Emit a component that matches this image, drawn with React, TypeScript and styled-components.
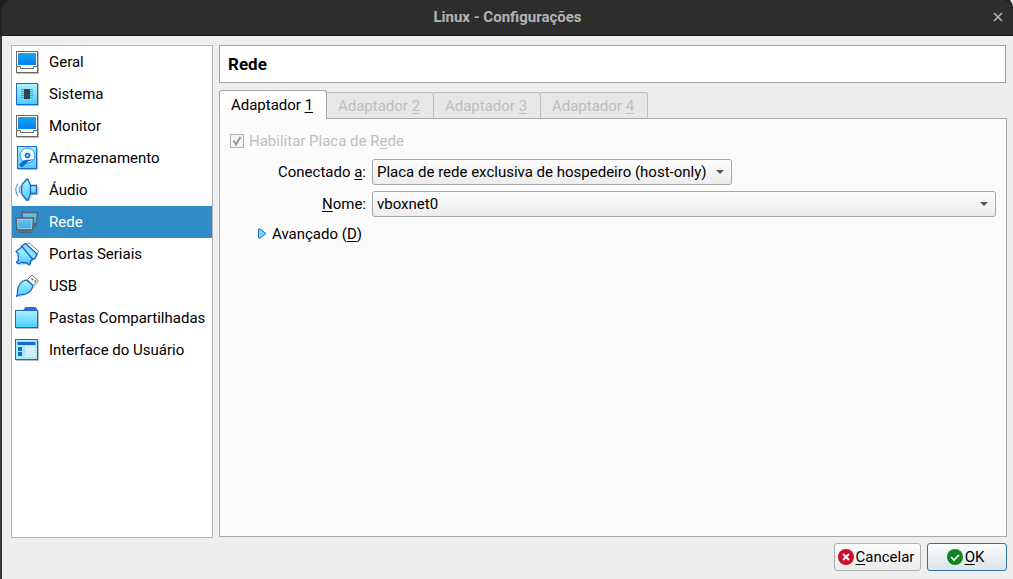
import React from "react";
import styled, { createGlobalStyle } from "styled-components";

const GlobalStyle = createGlobalStyle`
  *, *::before, *::after { box-sizing: border-box; }
  body {
    margin: 0;
    background: #1f1f1f;
    font-family: Roboto, "Noto Sans", sans-serif;
    font-size: 15px;
    line-height: 20px;
    color: #000;
  }
  button, select, input { font: inherit; color: inherit; }
`;

const Dialog = styled.div`
  display: flex;
  flex-direction: column;
  min-height: 100vh;
  background: #eeeeee;
  border-left: 2px solid #35383a;
`;

const TitleBar = styled.header`
  display: grid;
  grid-template-columns: 30px 1fr 30px;
  align-items: center;
  height: 36px;
  padding-bottom: 2px;
  background: #2d2d2d;
  border-bottom: 1px solid #1b1b1b;
  border-top-left-radius: 10px;
  border-top-right-radius: 10px;
  box-shadow: -2px -2px 0 2px #1f1f1f;
`;

const TitleText = styled.h1`
  grid-column: 2;
  margin: 0;
  text-align: center;
  font-size: 15px;
  line-height: 20px;
  font-weight: 700;
  color: #b4b4b4;
`;

const CloseButton = styled.button`
  display: flex;
  align-items: center;
  justify-content: center;
  height: 32px;
  padding: 0;
  border: 0;
  background: none;
`;

const Content = styled.div`
  flex: 1;
  display: flex;
  flex-direction: column;
  gap: 5px;
  padding: 9px 6px 8px 9px;
`;

const Columns = styled.div`
  flex: 1;
  display: flex;
  gap: 6px;
`;

const Categories = styled.nav`
  flex: none;
  width: 202px;
  background: #fff;
  border: 1px solid #b4b4b4;
`;

const CategoryLink = styled.a<{ $active: boolean }>`
  display: flex;
  align-items: center;
  gap: 10px;
  height: 32px;
  padding-left: 3px;
  text-decoration: none;
  white-space: nowrap;
  color: ${(p) => (p.$active ? "#fff" : "#000")};
  background: ${(p) => (p.$active ? "#308cc6" : "transparent")};
`;

const Page = styled.main`
  flex: 1;
  min-width: 0;
  display: flex;
  flex-direction: column;
  padding-bottom: 1px;
`;

const PageTitle = styled.h2`
  margin: 0 1px 7px 0;
  padding: 8px;
  font-size: 17px;
  line-height: 20px;
  font-weight: 700;
  background: #fff;
  border: 1px solid #a0a0a0;
`;

const TabList = styled.div`
  display: flex;
  align-items: flex-end;
  height: 28px;
`;

const Tab = styled.button<{ $active: boolean }>`
  width: ${(p) => (p.$active ? 108 : 107)}px;
  height: ${(p) => (p.$active ? 29 : 26)}px;
  padding: 0 2px 0 0;
  z-index: 1;
  margin-bottom: ${(p) => (p.$active ? -1 : 0)}px;
  border: 1px solid ${(p) => (p.$active ? "#a8a8a8" : "#bdbdbd")};
  border-left-width: ${(p) => (p.$active ? 1 : 0)}px;
  border-bottom: 0;
  border-radius: ${(p) => (p.$active ? "3px 3px 0 0" : "0 3px 0 0")};
  background: ${(p) => (p.$active ? "linear-gradient(#ffffff, #fbfbfb)" : "#e7e7e7")};
  color: ${(p) => (p.$active ? "#000" : "#bebebe")};
`;

const TabPanel = styled.section`
  flex: 1;
  padding: 12px 10px;
  background: #fbfbfb;
  border: 1px solid #a8a8a8;
`;

const EnableLabel = styled.label`
  display: flex;
  align-items: center;
  gap: 5px;
  color: #bebebe;
`;

const CheckMark = styled.svg`
  grid-area: 1 / 1;
  pointer-events: none;
`;

const CheckSlot = styled.span`
  display: grid;
  place-items: center;
`;

const CheckInput = styled.input`
  grid-area: 1 / 1;
  appearance: none;
  width: 14px;
  height: 14px;
  margin: 0;
  border: 1px solid #b2b2b2;
  background: #f4f4f4;
`;

const Form = styled.div`
  display: grid;
  grid-template-columns: 136px 1fr;
  column-gap: 6px;
  row-gap: 6px;
  margin-top: 8px;
  align-items: center;
`;

const FieldLabel = styled.label`
  text-align: right;
`;

const SelectSlot = styled.div<{ $wide?: boolean }>`
  display: grid;
  align-items: center;
  width: ${(p) => (p.$wide ? "100%" : "360px")};
  max-width: 100%;
`;

const Select = styled.select`
  grid-area: 1 / 1;
  appearance: none;
  width: 100%;
  height: 26px;
  padding: 0 24px 0 4px;
  border: 1px solid #a8a8a8;
  border-radius: 3px;
  background: linear-gradient(#fdfdfd, #ececec);
`;

const SelectArrow = styled.svg`
  grid-area: 1 / 1;
  justify-self: end;
  margin-right: 8px;
  pointer-events: none;
`;

const AdvancedButton = styled.button`
  display: flex;
  align-items: center;
  gap: 5px;
  margin: 7px 0 0 27px;
  padding: 0;
  border: 0;
  background: none;
`;

const Disclosure = styled.svg`
  flex: none;
  margin-bottom: 2px;
`;

const Footer = styled.footer`
  display: flex;
  justify-content: flex-end;
  gap: 6px;
`;

const ActionButton = styled.button<{ $primary?: boolean }>`
  display: flex;
  align-items: center;
  justify-content: center;
  gap: 2px;
  width: ${(p) => (p.$primary ? 80 : 87)}px;
  height: 28px;
  padding: 0 3px 0 0;
  border: 1px solid ${(p) => (p.$primary ? "#2f74a3" : "#b0b0b0")};
  border-radius: 3px;
  background: ${(p) =>
    p.$primary ? "linear-gradient(#fafdfe, #dae3e9)" : "linear-gradient(#fdfdfd, #ebebeb)"};
`;

const Key = styled.span`
  text-decoration: underline;
  text-decoration-thickness: 1px;
  text-decoration-skip-ink: none;
  text-underline-offset: 2px;
`;

const IconSvg = styled.svg`
  flex: none;
`;

const Icon = ({ children }: { children: React.ReactNode }) => (
  <IconSvg width="24" height="24" viewBox="0 0 24 24" fill="none" aria-hidden="true">
    {children}
  </IconSvg>
);

const GradientDefs = styled.svg`
  position: absolute;
`;

const Gradients = () => (
  <GradientDefs width="0" height="0" aria-hidden="true">
    <defs>
      <linearGradient id="screen" x1="0" y1="0" x2="0" y2="1">
        <stop offset="0" stopColor="#1ba4e6" />
        <stop offset="1" stopColor="#0080fa" />
      </linearGradient>
      <linearGradient id="cyan" x1="0" y1="0" x2="0" y2="1">
        <stop offset="0" stopColor="#b4f0ff" />
        <stop offset="1" stopColor="#48ceff" />
      </linearGradient>
      <linearGradient id="lit" x1="0" y1="0" x2="0" y2="1">
        <stop offset="0" stopColor="#72bfe6" />
        <stop offset="1" stopColor="#3caee8" />
      </linearGradient>
    </defs>
  </GradientDefs>
);

const ScreenIcon = () => (
  <Icon>
    <path d="M2 23.5h21.5V2" stroke="#bbb" />
    <rect x="1.5" y="1.5" width="21" height="21" fill="#fff" stroke="#686868" />
    <rect x="3" y="3" width="18" height="12" fill="url(#screen)" />
    <path d="M2 16.5h3.5v2h13v-2H22" stroke="#686868" />
  </Icon>
);

const SystemIcon = () => (
  <Icon>
    <path d="M2 23.5h21.5V2" stroke="#bbb" />
    <rect x="1.5" y="1.5" width="21" height="21" fill="url(#cyan)" stroke="#1769cc" />
    <path d="M6 7.5h12M6 9.5h12M6 11.5h12M6 13.5h12M6 15.5h12" stroke="#5c9ab8" />
    <rect x="9" y="7" width="6" height="10" fill="#36414f" />
  </Icon>
);

const StorageIcon = () => (
  <Icon>
    <path d="M3 23.5h19.5V2" stroke="#bbb" />
    <rect x="2.5" y=".5" width="19" height="22" fill="url(#cyan)" stroke="#1769cc" />
    <circle cx="12.5" cy="9.5" r="7.5" fill="#eafaff" stroke="#3a8ee0" />
    <path d="M13.5 14l-3 4-4 3-2-2.5 4-3.5z" fill="#1769cc" stroke="#1769cc" strokeLinejoin="round" />
    <path d="M17.5 13.5L13 15" stroke="#1769cc" />
    <circle cx="12.5" cy="9.5" r="2" fill="#8be0ff" stroke="#1769cc" strokeWidth="1.5" />
  </Icon>
);

const AudioIcon = () => (
  <Icon>
    <path d="M3 5.5q-4.500 6 0 12.500M5.500 8q-2.500 3.500 0 7.500" stroke="#4a9be6" strokeWidth="1.200" />
    <path d="M15 16.500h8V8.500M14 23l2.500-6" stroke="#bbb" />
    <path d="M14.500 7.500h7v8h-7z" fill="url(#cyan)" stroke="#1464c8" strokeWidth="1.300" />
    <path
      d="M12 1L7.500 6C6 8.500 6 14.500 7.500 17l4.500 5.500 1-.500L15.500 15.500v-8L13 1.500z"
      fill="url(#cyan)"
      stroke="#1464c8"
      strokeWidth="1.300"
      strokeLinejoin="round"
    />
  </Icon>
);

const NetworkIcon = () => (
  <Icon>
    <path d="M7 2.5h15.5l-1 11.500H8z" fill="url(#lit)" stroke="#56626c" strokeWidth="1.500" />
    <path d="M18 15.5h3.5" stroke="#56626c" strokeWidth="2" />
    <path d="M1 8h17.5l-1 12H2z" fill="url(#lit)" stroke="#56626c" strokeWidth="1.500" />
    <path d="M2.5 9.5H17L16.500 18.500H3z" stroke="#9bd4ee" strokeWidth=".8" />
    <path d="M4 22.5h12.500" stroke="#56626c" strokeWidth="1.500" />
  </Icon>
);

const SerialIcon = () => (
  <Icon>
    <path d="M5 22.5l9-1 4-3 5-6" stroke="#bbb" />
    <path d="M11.5 2.5L14 1l9.500 8-1.500 3.500z" fill="#fff" stroke="#808080" strokeLinejoin="round" />
    <path
      d="M7.5 4.5L1 9.500l2 2 .5 6.500-2 2.500 2 1.500 2.500-1.500 6 .5 2 2 1.500-1.500V19l3.500-3z"
      fill="url(#cyan)"
      stroke="#1464c8"
      strokeWidth="1.300"
      strokeLinejoin="round"
    />
    <path
      d="M6.5 4l4-2.500L22 12l-2 4.500-2.500.5z"
      fill="#8ee0ff"
      stroke="#1464c8"
      strokeWidth="1.300"
      strokeLinejoin="round"
    />
  </Icon>
);

const UsbIcon = () => (
  <Icon>
    <path d="M4 22.5l5.500-1.500 7-5 7-8.500" stroke="#bbb" />
    <path d="M12.5 5.5L17 1l6 5.500-5 5z" fill="#fff" stroke="#777" strokeLinejoin="round" />
    <path d="M16.5 4.5l1.500 1.500M19.500 6.500l1.500 1" stroke="#555" strokeWidth="1.500" />
    <path
      d="M11.5 6l6.500 5.500c-1 5.500-6 9.500-12.500 9L1.500 22.500l1-3.500C2 12 6 7 11.500 6z"
      fill="url(#cyan)"
      stroke="#1464c8"
      strokeWidth="1.200"
      strokeLinejoin="round"
    />
  </Icon>
);

const FolderIcon = () => (
  <Icon>
    <path d="M1 22.5h22.5V5" stroke="#bbb" />
    <path d="M8.5 4.5l2-3h10l2 3z" fill="#2a6fd0" stroke="#1769cc" />
    <rect x=".5" y="4.5" width="22" height="17" fill="url(#cyan)" stroke="#1769cc" />
  </Icon>
);

const InterfaceIcon = () => (
  <Icon>
    <path d="M1 22.5h22.5V3" stroke="#bbb" />
    <rect x=".5" y="1.5" width="22" height="20" fill="#a4e8ff" stroke="#1769cc" />
    <path d="M2.5 5.500h18" stroke="#1769cc" strokeWidth="3" />
    <path d="M3 9h4v4H3zM3 14h4v4H3z" fill="#1769cc" />
    <rect x="10" y="8" width="11" height="11" fill="#d2f0fa" />
  </Icon>
);

const categories: { name: string; icon: React.ReactNode }[] = [
  { name: "Geral", icon: <ScreenIcon /> },
  { name: "Sistema", icon: <SystemIcon /> },
  { name: "Monitor", icon: <ScreenIcon /> },
  { name: "Armazenamento", icon: <StorageIcon /> },
  { name: "Áudio", icon: <AudioIcon /> },
  { name: "Rede", icon: <NetworkIcon /> },
  { name: "Portas Seriais", icon: <SerialIcon /> },
  { name: "USB", icon: <UsbIcon /> },
  { name: "Pastas Compartilhadas", icon: <FolderIcon /> },
  { name: "Interface do Usuário", icon: <InterfaceIcon /> },
];

const Arrow = () => (
  <SelectArrow width="8" height="4" viewBox="0 0 8 4" aria-hidden="true">
    <path d="M0 0h8L4 4z" fill="#555" />
  </SelectArrow>
);

export default function App() {
  return (
    <Dialog>
      <GlobalStyle />
      <Gradients />
      <TitleBar>
        <TitleText>Linux - Configurações</TitleText>
        <CloseButton type="button" aria-label="Fechar">
          <svg width="10" height="10" viewBox="0 0 10 10" aria-hidden="true">
            <path d="M1 1l8 8M9 1L1 9" stroke="#bababa" strokeWidth="1.5" />
          </svg>
        </CloseButton>
      </TitleBar>
      <Content>
        <Columns>
          <Categories>
            {categories.map(({ name, icon }) => (
              <CategoryLink
                key={name}
                href="#"
                $active={name === "Rede"}
                aria-current={name === "Rede" ? "page" : undefined}
              >
                {icon}
                {name}
              </CategoryLink>
            ))}
          </Categories>
          <Page>
            <PageTitle>Rede</PageTitle>
            <TabList role="tablist">
              {[1, 2, 3, 4].map((n) => (
                <Tab key={n} type="button" role="tab" $active={n === 1} aria-selected={n === 1} disabled={n !== 1}>
                  Adaptador <Key>{n}</Key>
                </Tab>
              ))}
            </TabList>
            <TabPanel role="tabpanel">
              <EnableLabel>
                <CheckSlot>
                  <CheckInput type="checkbox" defaultChecked disabled />
                  <CheckMark width="10" height="10" viewBox="0 0 10 10" aria-hidden="true">
                    <path d="M1.5 4.5L4 8.500 8.500 1" fill="none" stroke="#999" strokeWidth="2" />
                  </CheckMark>
                </CheckSlot>
                <span>
                  Habilitar Placa de R<Key>e</Key>de
                </span>
              </EnableLabel>
              <Form>
                <FieldLabel htmlFor="attached">
                  Conectado <Key>a</Key>:
                </FieldLabel>
                <SelectSlot>
                  <Select id="attached">
                    <option>Placa de rede exclusiva de hospedeiro (host-only)</option>
                  </Select>
                  <Arrow />
                </SelectSlot>
                <FieldLabel htmlFor="name">
                  <Key>N</Key>ome:
                </FieldLabel>
                <SelectSlot $wide>
                  <Select id="name">
                    <option>vboxnet0</option>
                  </Select>
                  <Arrow />
                </SelectSlot>
              </Form>
              <AdvancedButton type="button" aria-expanded={false}>
                <Disclosure width="10" height="11" viewBox="0 0 10 11" aria-hidden="true">
                  <path d="M1.5 1v9H3l6-4.500L3 1z" fill="#70d6ff" stroke="#1769cc" strokeLinejoin="round" />
                </Disclosure>
                <span>
                  Avançado (<Key>D</Key>)
                </span>
              </AdvancedButton>
            </TabPanel>
          </Page>
        </Columns>
        <Footer>
          <ActionButton type="button">
            <IconSvg width="16" height="16" viewBox="0 0 16 16" aria-hidden="true">
              <circle cx="8" cy="8" r="8" fill="#c8102e" />
              <path d="M5 5l6 6M11 5l-6 6" stroke="#fff" strokeWidth="1.8" />
            </IconSvg>
            <span>
              <Key>C</Key>ancelar
            </span>
          </ActionButton>
          <ActionButton type="button" $primary>
            <IconSvg width="16" height="16" viewBox="0 0 16 16" aria-hidden="true">
              <circle cx="8" cy="8" r="8" fill="#0f8420" />
              <path d="M4 8l3 3 5-5" fill="none" stroke="#fff" strokeWidth="1.6" />
            </IconSvg>
            <span>
              <Key>O</Key>K
            </span>
          </ActionButton>
        </Footer>
      </Content>
    </Dialog>
  );
}
